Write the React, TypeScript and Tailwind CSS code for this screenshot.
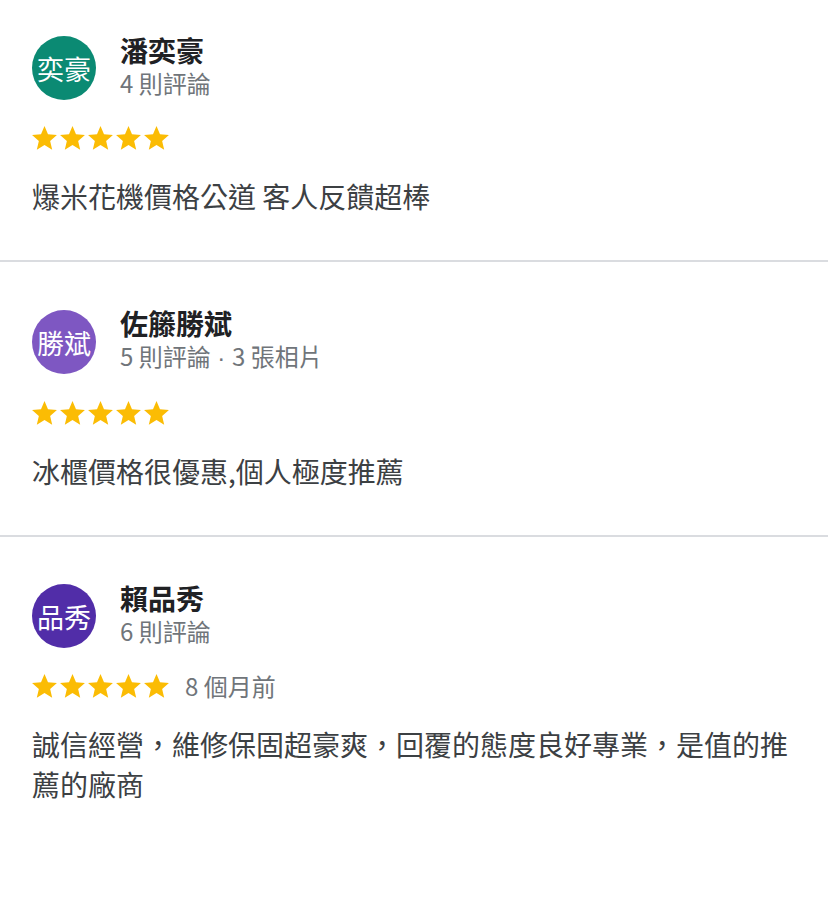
import React from "react";

const font = { fontFamily: '"Noto Sans CJK TC", "Noto Sans", sans-serif' };
const latin = { fontFamily: '"Liberation Sans", "Noto Sans CJK TC", sans-serif' };

function Star() {
  return (
    <svg width="25" height="24" viewBox="2 2 20 19.3" className="block">
      <path
        d="M12 17.27L18.18 21l-1.64-7.03L22 9.24l-7.19-.61L12 2 9.19 8.63 2 9.24l5.46 4.73L5.82 21z"
        fill="#fbbc04"
      />
    </svg>
  );
}

type Review = {
  initials: string;
  color: string;
  name: string;
  meta: React.ReactNode;
  time?: string;
  text: string;
};

const reviews: Review[] = [
  {
    initials: "奕豪",
    color: "bg-[#0b8a73]",
    name: "潘奕豪",
    meta: "4 則評論",
    text: "爆米花機價格公道 客人反饋超棒",
  },
  {
    initials: "勝斌",
    color: "bg-[#7e57c2]",
    name: "佐籐勝斌",
    meta: (
      <>
        5 則評論<span style={latin}> · </span>3 張相片
      </>
    ),
    text: "冰櫃價格很優惠,個人極度推薦",
  },
  {
    initials: "品秀",
    color: "bg-[#512da8]",
    name: "賴品秀",
    meta: "6 則評論",
    time: "8 個月前",
    text: "誠信經營，維修保固超豪爽，回覆的態度良好專業，是值的推薦的廠商",
  },
];

function Card({ r, first, last }: { r: Review; first: boolean; last: boolean }) {
  return (
    <div
      className={`px-8 ${first ? "pt-[36px]" : "pt-[47px]"} pb-[44px] ${
        last ? "" : "border-b-2 border-[#dadce0]"
      }`}
    >
      <div className="flex items-center">
        <div
          className={`w-16 h-16 rounded-full ${r.color} flex items-center justify-center text-white text-[27px] leading-none shrink-0`}
        >
          {r.initials}
        </div>
        <div className="ml-6 flex flex-col -mt-[2px]">
          <div className="text-[28px] leading-[32px] font-bold text-[#202124]">{r.name}</div>
          <div className="text-[24px] leading-[34px] text-[#70757a]">{r.meta}</div>
        </div>
      </div>
      <div className="mt-6 h-7 flex items-center">
        <div className="flex gap-[3px]">
          <Star />
          <Star />
          <Star />
          <Star />
          <Star />
        </div>
        {r.time && (
          <div className="ml-4 text-[24px] leading-7 text-[#70757a]">{r.time}</div>
        )}
      </div>
      <div className="mt-6 text-[28px] leading-[40px] text-[#3c4043] pr-2">{r.text}</div>
    </div>
  );
}

export default function App() {
  return (
    <div className="w-[828px] h-[915px] bg-white overflow-hidden" style={font}>
      {reviews.map((r, i) => (
        <Card key={i} r={r} first={i === 0} last={i === reviews.length - 1} />
      ))}
    </div>
  );
}
